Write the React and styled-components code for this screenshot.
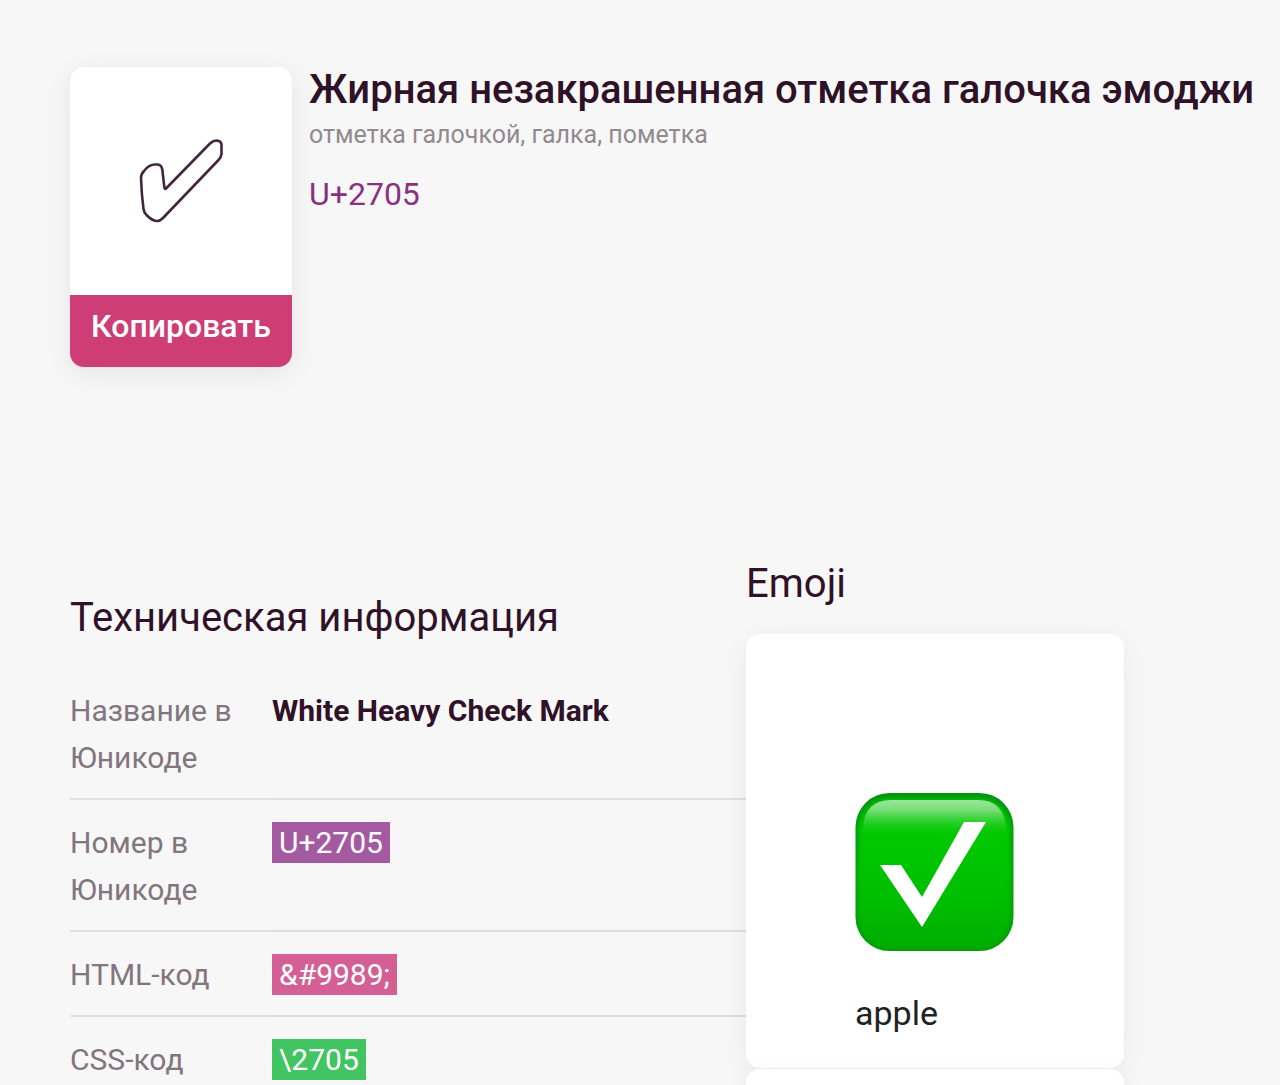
import React from "react";
import styled, { createGlobalStyle } from "styled-components";

const GlobalStyle = createGlobalStyle`
  *, *::before, *::after { box-sizing: border-box; }
  body {
    margin: 0;
    background: #f7f7f7;
    color: #2f1128;
    font-family: Roboto, "Liberation Sans", sans-serif;
  }
`;

const Page = styled.main`
  height: 100vh;
  overflow: hidden;
  padding: 67px 0 0 70px;
`;

const Hero = styled.header`
  display: flex;
  align-items: flex-start;
  gap: 17px;
`;

const SymbolCard = styled.div`
  flex: none;
  width: 222px;
  background: #fff;
  border-radius: 14px;
  box-shadow: 0 6px 28px rgba(0, 0, 0, 0.08);
  overflow: hidden;
`;

const SymbolFace = styled.div`
  height: 228px;
  display: flex;
  align-items: center;
  justify-content: center;
`;

const CopyButton = styled.button`
  display: block;
  width: 100%;
  height: 72px;
  padding: 0 0 10px;
  border: 0;
  background: #ce3d75;
  color: #fff;
  font: 500 32px/40px Roboto, "Liberation Sans", sans-serif;
  cursor: pointer;
`;

const HeroText = styled.div`
  min-width: 0;
`;

const Title = styled.h1`
  margin: 0;
  font-size: 40px;
  line-height: 46px;
  font-weight: 500;
  white-space: nowrap;
`;

const Keywords = styled.p`
  margin: 8px 0 0;
  color: #918a8f;
  font-size: 25px;
  line-height: 28px;
`;

const CodePoint = styled.p`
  margin: 25px 0 0;
  color: #893180;
  font-size: 32px;
  line-height: 40px;
`;

const Columns = styled.div`
  display: grid;
  grid-template-columns: minmax(0, 1fr) 378px;
  align-items: start;
  margin-top: 193px;
  padding-right: 156px;
`;

const Info = styled.section`
  padding-top: 34px;
`;

const Heading = styled.h2`
  margin: 0;
  font-size: 40px;
  line-height: 48px;
  font-weight: 400;
`;

const InfoTable = styled.table`
  width: 100%;
  margin-top: 26px;
  border-collapse: collapse;
  table-layout: fixed;
  font-size: 30px;
  line-height: 47px;
  text-align: left;
`;

const Label = styled.th`
  width: 202px;
  padding: 19px 32px 17px 0;
  border-bottom: 2px solid #e2e1e2;
  color: #82767e;
  font-weight: 400;
  vertical-align: top;
`;

const Value = styled.td`
  padding: 19px 0 17px;
  border-bottom: 2px solid #dedede;
  vertical-align: top;
`;

const Badge = styled.code`
  padding: 3px 7px;
  background: ${(p) => p.$color};
  color: #fff;
  font-family: inherit;
`;

const Gallery = styled.section`
  position: relative;
`;

const VendorCard = styled.figure`
  height: 434px;
  margin: 0 0 1px;
  padding: 158px 109px 0;
  background: #fff;
  border-radius: 14px;
  box-shadow: 0 6px 28px rgba(0, 0, 0, 0.06);

  svg { display: block; }
`;

const CardList = styled.div`
  margin-top: 26px;
`;

const Vendor = styled.figcaption`
  margin-top: 41px;
  color: #222;
  font-size: 34px;
  line-height: 40px;
`;

const OutlineCheck = () => (
  <svg width="88" height="88" viewBox="137 136 88 88" fill="none" role="img" aria-label="White Heavy Check Mark">
    <path
      d="M166 187.500L210 142.500Q213 139.500 216.500 139.500Q221.500 140 221.500 144V153Q221 156.500 218.500 159L163 217Q159.500 220.500 156.500 220Q152 219.500 147 214.500Q144 212 143.500 208Q141.500 193 141 177Q141 173 144 170Q149 163.500 155 163.500H158Q162 164 162.500 170Q164 184 164.500 187Q165 188.500 166 187.500Z"
      stroke="#42263c"
      strokeWidth="2.600"
      strokeLinejoin="round"
    />
  </svg>
);

const GreenCheck = () => (
  <svg width="160" height="160" viewBox="0 0 160 160" role="img" aria-label="White Heavy Check Mark, apple">
    <defs>
      <linearGradient id="face" x1="0" y1="0" x2="0" y2="1">
        <stop offset="0" stopColor="#00cc05" />
        <stop offset="0.300" stopColor="#00c704" />
        <stop offset="0.700" stopColor="#00bd00" />
        <stop offset="1" stopColor="#00ac00" />
      </linearGradient>
      <linearGradient id="edge" x1="0" y1="0" x2="0" y2="1">
        <stop offset="0" stopColor="#009510" />
        <stop offset="0.500" stopColor="#00a80a" />
        <stop offset="1" stopColor="#009a08" />
      </linearGradient>
      <linearGradient id="gloss" x1="0" y1="0" x2="0" y2="1">
        <stop offset="0" stopColor="#9be69b" />
        <stop offset="0.300" stopColor="#85e085" stopOpacity="0.900" />
        <stop offset="1" stopColor="#30d030" stopOpacity="0" />
      </linearGradient>
      <filter id="soft" x="-10%" y="-10%" width="120%" height="120%">
        <feGaussianBlur stdDeviation="2" />
      </filter>
      <filter id="glossSoft" x="-5%" y="-10%" width="110%" height="120%">
        <feGaussianBlur stdDeviation="0.700" />
      </filter>
      <clipPath id="tile">
        <rect x="0.500" y="1" width="158" height="158" rx="34" />
      </clipPath>
    </defs>
    <g clipPath="url(#tile)">
      <rect width="160" height="160" fill="url(#edge)" />
      <rect x="4" y="7" width="151" height="150" rx="30" fill="url(#face)" filter="url(#soft)" />
      <path d="M8 42V36Q10 8 36 8H123Q149 8 151 36V42Z" fill="url(#gloss)" filter="url(#glossSoft)" />
    </g>
    <path d="M25 73H46L67 105L109 30H131L67 135Z" fill="#fff" />
  </svg>
);

const ROWS = [
  { label: "Название в Юникоде", value: "White Heavy Check Mark" },
  { label: "Номер в Юникоде", value: "U+2705", color: "#a45aa1" },
  { label: "HTML-код", value: "&#9989;", color: "#d45f94" },
  { label: "CSS-код", value: "\\2705", color: "#43c463" },
];

export default function App() {
  return (
    <>
      <GlobalStyle />
      <Page>
        <Hero>
          <SymbolCard>
            <SymbolFace>
              <OutlineCheck />
            </SymbolFace>
            <CopyButton type="button">Копировать</CopyButton>
          </SymbolCard>
          <HeroText>
            <Title>Жирная незакрашенная отметка галочка эмоджи</Title>
            <Keywords>отметка галочкой, галка, пометка</Keywords>
            <CodePoint>U+2705</CodePoint>
          </HeroText>
        </Hero>
        <Columns>
          <Info>
            <Heading>Техническая информация</Heading>
            <InfoTable>
              <tbody>
                {ROWS.map((row) => (
                  <tr key={row.label}>
                    <Label scope="row">{row.label}</Label>
                    <Value>
                      {row.color ? <Badge $color={row.color}>{row.value}</Badge> : <strong>{row.value}</strong>}
                    </Value>
                  </tr>
                ))}
              </tbody>
            </InfoTable>
          </Info>
          <Gallery>
            <Heading>Emoji</Heading>
            <CardList>
              <VendorCard>
                <GreenCheck />
                <Vendor>apple</Vendor>
              </VendorCard>
              <VendorCard />
            </CardList>
          </Gallery>
        </Columns>
      </Page>
    </>
  );
}
